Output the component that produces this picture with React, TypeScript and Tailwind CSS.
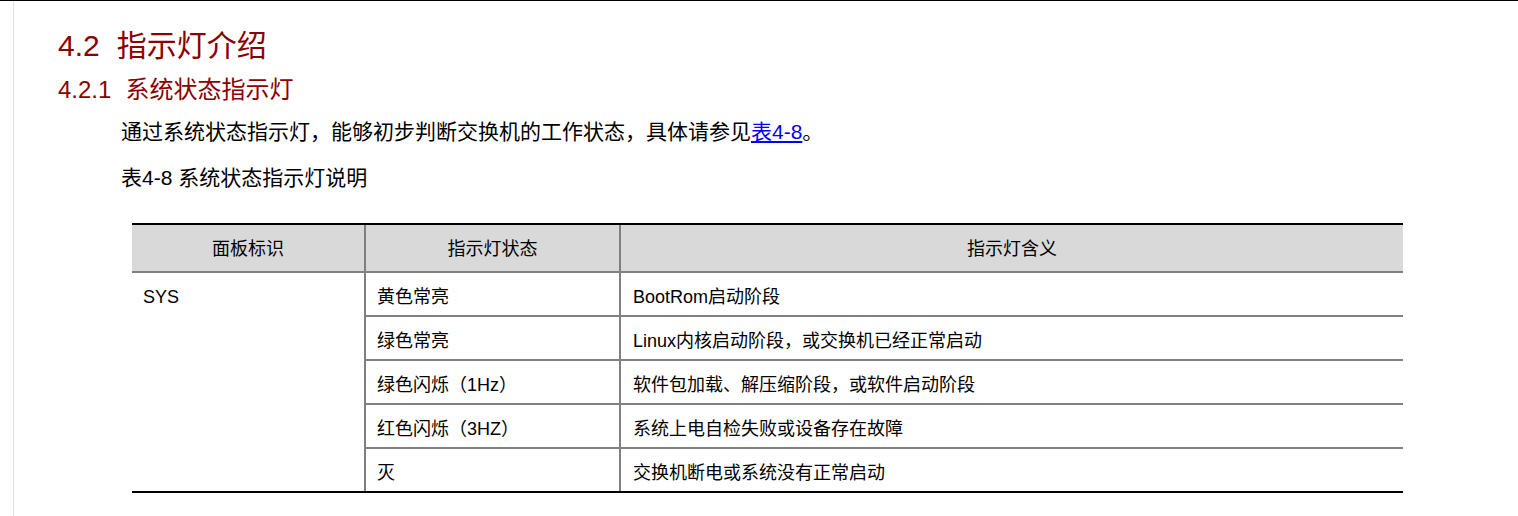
import React from 'react';

const rows = [
  { state: '黄色常亮', meaning: 'BootRom启动阶段' },
  { state: '绿色常亮', meaning: 'Linux内核启动阶段，或交换机已经正常启动' },
  { state: '绿色闪烁（1Hz）', meaning: '软件包加载、解压缩阶段，或软件启动阶段' },
  { state: '红色闪烁（3HZ）', meaning: '系统上电自检失败或设备存在故障' },
  { state: '灭', meaning: '交换机断电或系统没有正常启动' },
];

const App: React.FC = () => {
  return (
    <div
      className="h-[516px] w-[1518px] overflow-hidden border-t border-black bg-white text-black"
      style={{ fontFamily: '"Liberation Sans", "Noto Sans CJK SC", sans-serif' }}
    >
      <div className="ml-[13px] h-full border-l border-[#e0e0e0] pl-[44px] pt-[30px]">
        {/* 标题 */}
        <h1 className="flex text-[30px] leading-[30px] text-[#8b0000]">
          <span>4.2</span>
          <span className="ml-[17px]">指示灯介绍</span>
        </h1>
        <h2 className="mt-[17px] flex text-[24px] leading-[24px] text-[#8b0000]">
          <span>4.2.1</span>
          <span className="ml-[14px]">系统状态指示灯</span>
        </h2>

        {/* 正文 */}
        <div className="pl-[63px]">
          <p className="mt-[19px] text-[21px] leading-[21px]">
            通过系统状态指示灯，能够初步判断交换机的工作状态，具体请参见
            <a href="#" className="text-[#0000ff] underline">表4-8</a>。
          </p>
          <p className="mt-[25px] text-[21px] leading-[21px]">表4-8 系统状态指示灯说明</p>
        </div>

        {/* 表格 */}
        <div className="ml-[74px] mt-[35px] w-[1271px] text-[18px] leading-[18px]">
          <div className="flex h-[50px] border-t-2 border-b-2 border-t-black border-b-[#808080] bg-[#d9d9d9]">
            <div className="flex w-[234px] items-center justify-center border-r-2 border-[#808080] pt-[2px]">面板标识</div>
            <div className="flex w-[255px] items-center justify-center border-r-2 border-[#808080] pt-[2px]">指示灯状态</div>
            <div className="flex flex-1 items-center justify-center pt-[2px]">指示灯含义</div>
          </div>
          <div className="flex border-b-2 border-black">
            <div className="w-[234px] border-r-2 border-[#808080]">
              <div className="flex h-[42px] items-center pl-[11px] pt-[5px]">SYS</div>
            </div>
            <div className="flex flex-1 flex-col">
              {rows.map((r, i) => (
                <div
                  key={r.state}
                  className={
                    i < rows.length - 1
                      ? 'flex h-[44px] border-b-2 border-[#808080]'
                      : 'flex h-[42px]'
                  }
                >
                  <div className="flex w-[255px] items-center border-r-2 border-[#808080] pl-[11px] pt-[5px]">
                    {r.state}
                  </div>
                  <div className="flex flex-1 items-center pl-[12px] pt-[5px]">{r.meaning}</div>
                </div>
              ))}
            </div>
          </div>
        </div>
      </div>
    </div>
  );
};

export default App;
